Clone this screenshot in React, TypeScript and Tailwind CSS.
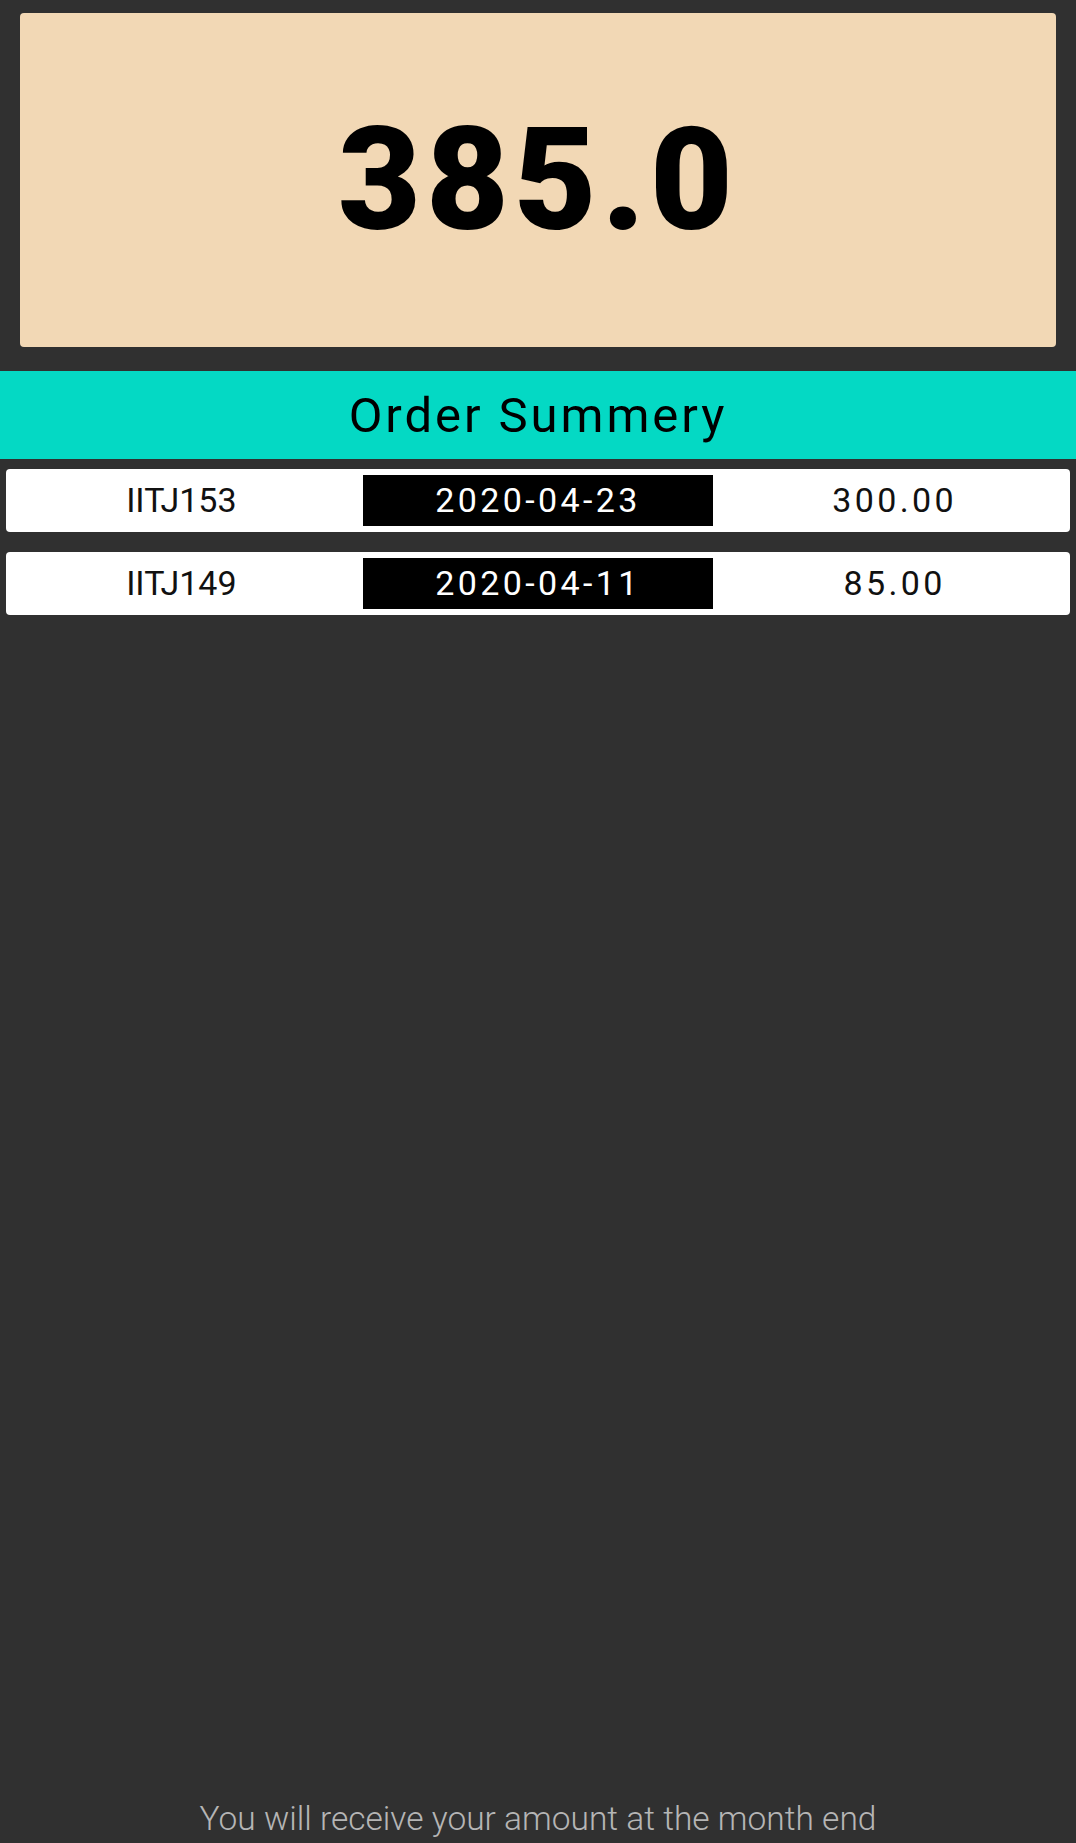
const orders = [
  { id: "IITJ153", date: "2020-04-23", amount: "300.00" },
  { id: "IITJ149", date: "2020-04-11", amount: "85.00" },
];

const App = () => {
  return (
    <div className="min-h-screen flex flex-col bg-[#303030] font-['Roboto',sans-serif]">
      {/* Total card */}
      <div className="px-5 pt-[13px]">
        <div className="h-[334px] rounded-[4px] bg-[#f2d8b5] flex items-center justify-center">
          <span className="text-[143px] leading-none font-black tracking-[0.035em] text-black">385.0</span>
        </div>
      </div>

      {/* Header */}
      <div className="mt-6 h-[88px] bg-[#04d9c4] flex items-center justify-center">
        <h1 className="text-[49px] leading-none font-normal tracking-[0.06em] text-black">Order Summery</h1>
      </div>

      {/* Order rows */}
      <div className="px-[6px] pt-[10px] flex flex-col gap-5">
        {orders.map((o) => (
          <div key={o.id} className="h-[63px] p-[6px] rounded-[4px] bg-white grid grid-cols-3">
            <div className="flex items-center justify-center pr-[12px] text-[34px] tracking-normal text-[#111]">{o.id}</div>
            <div className="flex items-center justify-center bg-black text-[34px] tracking-widest text-white">{o.date}</div>
            <div className="flex items-center justify-center pl-[12px] text-[34px] tracking-widest text-[#111]">{o.amount}</div>
          </div>
        ))}
      </div>

      {/* Footer */}
      <p className="mt-auto pb-[2px] text-center text-[33.5px] leading-[44px] font-light text-[#b5b5b5]">
        You will receive your amount at the month end
      </p>
    </div>
  );
};

export default App;
